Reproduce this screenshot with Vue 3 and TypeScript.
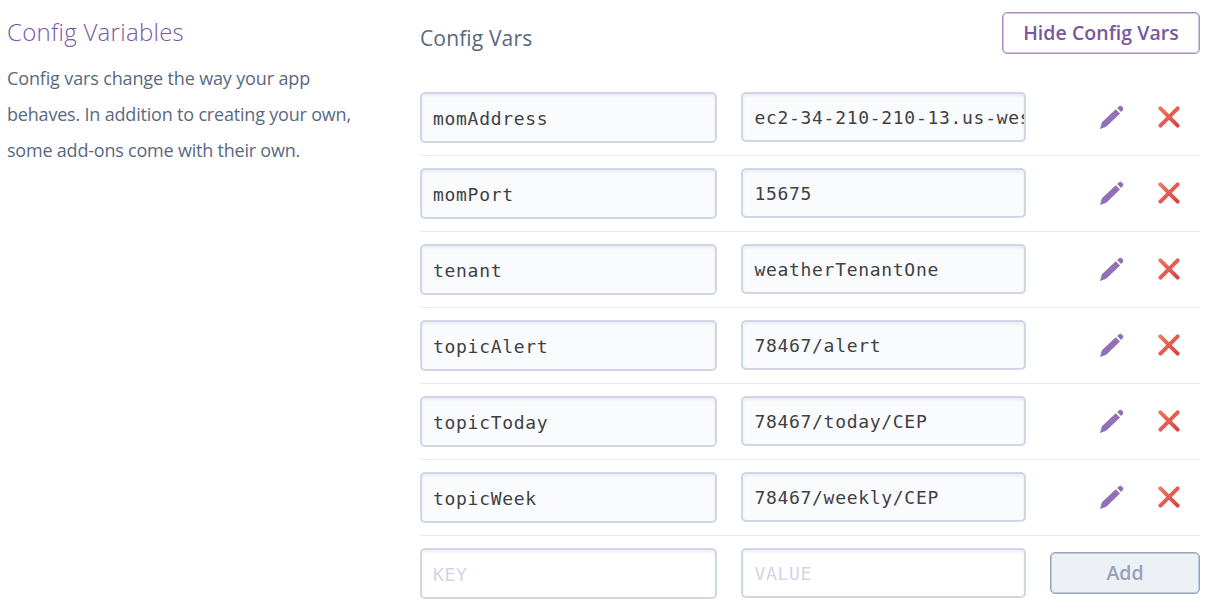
<script setup lang="ts">
interface ConfigVar {
  key: string
  value: string
}

const configVars: ConfigVar[] = [
  { key: 'momAddress', value: 'ec2-34-210-210-13.us-wes' },
  { key: 'momPort', value: '15675' },
  { key: 'tenant', value: 'weatherTenantOne' },
  { key: 'topicAlert', value: '78467/alert' },
  { key: 'topicToday', value: '78467/today/CEP' },
  { key: 'topicWeek', value: '78467/weekly/CEP' },
]
</script>

<template>
  <main class="page">
    <svg class="defs" width="0" height="0" aria-hidden="true">
      <defs>
        <linearGradient id="remove-gradient" x1="0" y1="0" x2="22" y2="22" gradientUnits="userSpaceOnUse">
          <stop offset="0" stop-color="#f27b68" />
          <stop offset="1" stop-color="#d13f3f" />
        </linearGradient>
      </defs>
    </svg>

    <aside class="intro">
      <h2 class="title">Config Variables</h2>
      <p class="description">
        <span class="l1">Config vars change the way your app</span><br />
        <span class="l2">behaves. In addition to creating your own,</span><br />
        <span class="l3">some add-ons come with their own.</span>
      </p>
    </aside>

    <section class="panel">
      <header class="head">
        <h3 class="subtitle">Config Vars</h3>
        <button class="btn hide" type="button">Hide Config Vars</button>
      </header>

      <div v-for="item in configVars" :key="item.key" class="row">
        <div class="field key">{{ item.key }}</div>
        <div class="field value">{{ item.value }}</div>
        <div class="actions">
          <svg class="pencil" width="24" height="24" viewBox="0 0 24 24">
            <path fill="#9270b6" d="M0 24 1.6 18.2Q1.8 17.4 2.4 16.8L15.8 4.3 20 8.4 7 21Q6.4 21.6 5.7 21.9Z" />
            <path fill="#9270b6" d="M17.1 3.1 19.1 1.2Q20.4.1 21.7 1.2L22.9 2.4Q24 3.7 22.9 4.9L21.1 7Z" />
          </svg>
          <svg class="remove" width="22" height="22" viewBox="0 0 22 22">
            <path d="M2.4 2.4 19.6 19.6M19.6 2.4 2.4 19.6" stroke="url(#remove-gradient)" stroke-width="4" stroke-linecap="round" fill="none" />
          </svg>
        </div>
      </div>

      <div class="row last">
        <div class="field key blank">KEY</div>
        <div class="field value blank">VALUE</div>
        <button class="btn add" type="button">Add</button>
      </div>
    </section>
  </main>
</template>

<style>
body {
  margin: 0;
  background: #fff;
}
</style>

<style scoped>
.page {
  display: flex;
  box-sizing: border-box;
  width: 1214px;
  height: 611px;
  padding-left: 7px;
  overflow: hidden;
  background: #fff;
  color: #596981;
  font-family: "Open Sans", "Noto Sans", sans-serif;
}
.defs {
  position: absolute;
}
.intro {
  width: 413px;
  flex: none;
}
.title {
  margin: 14px 0 0;
  color: #79589f;
  font-size: 24px;
  font-weight: 300;
  letter-spacing: 0.28px;
  line-height: 36px;
  white-space: nowrap;
}
.description {
  margin: 10px 0 0;
  font-size: 18px;
  line-height: 36px;
  white-space: nowrap;
}
.l1 {
  letter-spacing: -0.14px;
}
.l2 {
  letter-spacing: -0.19px;
}
.l3 {
  letter-spacing: -0.21px;
}
.panel {
  width: 780px;
  flex: none;
}
.head {
  display: flex;
  justify-content: space-between;
  box-sizing: border-box;
  height: 80px;
  padding-top: 12px;
}
.subtitle {
  margin: 10px 0 0;
  font-size: 21px;
  font-weight: 400;
  letter-spacing: 0.14px;
  line-height: 33px;
}
.btn {
  box-sizing: border-box;
  height: 42px;
  margin: 0;
  padding: 0;
  border-radius: 5px;
  font-family: inherit;
  font-size: 19.5px;
  font-weight: 600;
  line-height: 40px;
  white-space: nowrap;
}
.hide {
  width: 198px;
  border: 1px solid #a78fc2;
  background: #fff;
  box-shadow: inset 0 0 0 1px #d2c5e0;
  color: #79589f;
  letter-spacing: 0.05px;
}
.row {
  display: flex;
  align-items: flex-start;
  box-sizing: border-box;
  height: 76px;
  padding-top: 12px;
  border-bottom: 1px solid #e6e9f3;
}
.row.last {
  border-bottom: 0;
}
.field {
  box-sizing: border-box;
  flex: none;
  overflow: hidden;
  border: 2px solid #cfd7e6;
  border-radius: 5px;
  background: #fafbfd;
  box-shadow: inset 0 2px 3px rgba(207, 215, 230, 0.4);
  color: #3f3f44;
  font-family: "DejaVu Sans Mono", monospace;
  font-size: 18px;
  letter-spacing: 0.7px;
  white-space: nowrap;
}
.key {
  width: 297px;
  height: 51px;
  padding-left: 11px;
  line-height: 50px;
}
.value {
  width: 285px;
  height: 50px;
  margin-left: 24px;
  padding-left: 11.4px;
  line-height: 48px;
}
.blank {
  background: #fff;
  color: #cfd7e6;
}
.actions {
  display: flex;
  align-items: center;
  height: 50px;
  margin-left: 73.5px;
}
.remove {
  margin-left: 34px;
}
.add {
  width: 150px;
  margin: 4px 0 0 24px;
  border: 1px solid #96a3b8;
  background: #edf1f6;
  box-shadow: inset 0 0 0 1px #c0c9d7;
  color: #96a3b6;
}
</style>
